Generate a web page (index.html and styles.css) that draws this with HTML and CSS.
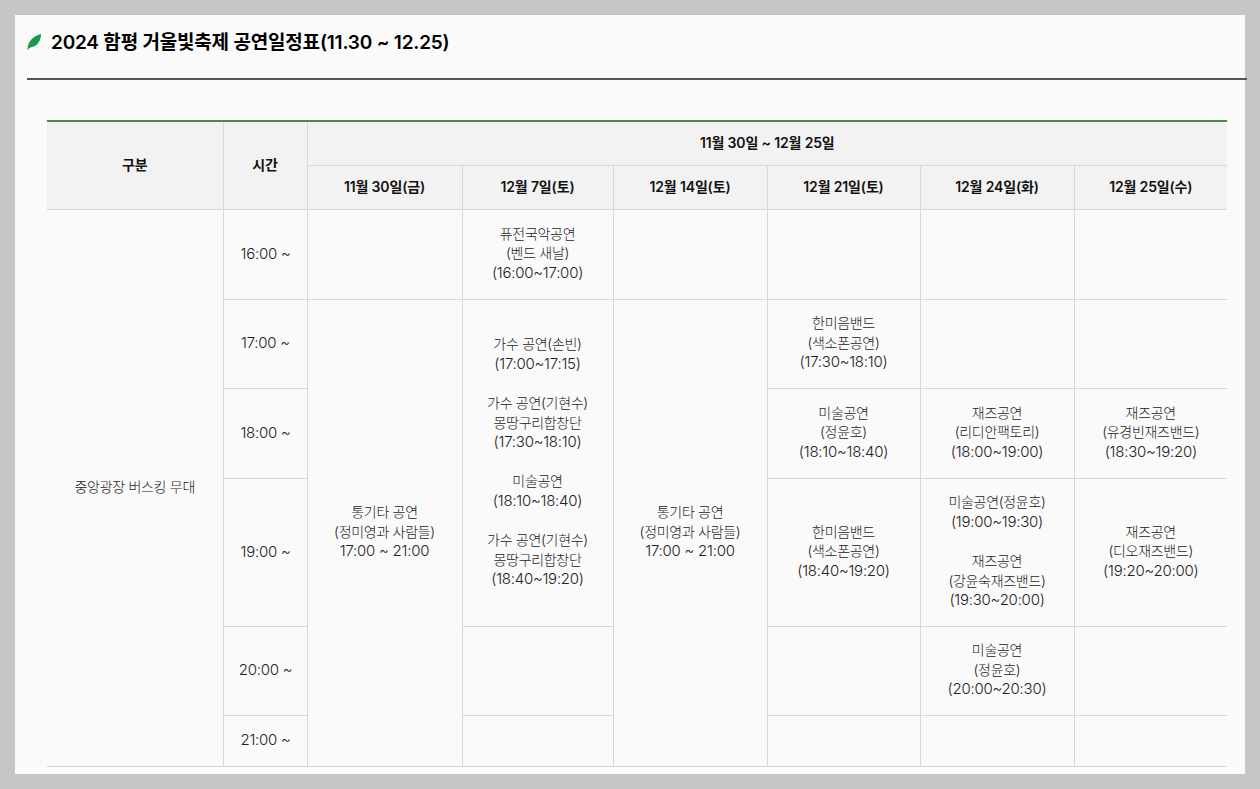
FILE: index.html
```html
<!DOCTYPE html>
<html lang="ko">
<head>
<meta charset="utf-8">
<title>2024 함평 거울빛축제 공연일정표</title>
<link rel="stylesheet" href="styles.css">
</head>
<body>
<main class="panel">
  <h1 class="title">
    <svg class="leaf" width="14" height="16" viewBox="0 0 14 16" aria-hidden="true"><path d="M0.6 16C0 9.5 5 2 14 0C14.2 7.5 9 13.5 3.2 13.4C2.2 14.2 1.4 15 0.6 16Z" fill="#1a9850"/></svg>
    <span>2024 함평 거울빛축제 공연일정표(11.30 ~ 12.25)</span>
  </h1>
  <table class="schedule">
    <colgroup>
      <col class="c-venue"><col class="c-time"><col class="c-d1"><col class="c-d2"><col class="c-d3"><col class="c-d4"><col class="c-d5"><col class="c-d6">
    </colgroup>
    <thead>
      <tr class="r-h1"><th rowspan="2">구분</th><th rowspan="2">시간</th><th colspan="6">11월 30일 ~ 12월 25일</th></tr>
      <tr class="r-h2"><th>11월 30일(금)</th><th>12월 7일(토)</th><th>12월 14일(토)</th><th>12월 21일(토)</th><th>12월 24일(화)</th><th>12월 25일(수)</th></tr>
    </thead>
    <tbody>
      <tr class="r-16">
        <td rowspan="6">중앙광장 버스킹 무대</td>
        <td class="slot"><span class="tm">16:00 ~</span></td>
        <td></td>
        <td>퓨전국악공연<br>(벤드 새날)<br><span class="tm">(16:00~17:00)</span></td>
        <td></td><td></td><td></td><td></td>
      </tr>
      <tr class="r-17">
        <td class="slot"><span class="tm">17:00 ~</span></td>
        <td rowspan="5">통기타 공연<br>(정미영과 사람들)<br><span class="tm">17:00 ~ 21:00</span></td>
        <td rowspan="3">가수 공연(손빈)<br><span class="tm">(17:00~17:15)</span><br><br>가수 공연(기현수)<br>몽땅구리합창단<br><span class="tm">(17:30~18:10)</span><br><br>미술공연<br><span class="tm">(18:10~18:40)</span><br><br>가수 공연(기현수)<br>몽땅구리합창단<br><span class="tm">(18:40~19:20)</span></td>
        <td rowspan="5">통기타 공연<br>(정미영과 사람들)<br><span class="tm">17:00 ~ 21:00</span></td>
        <td>한미음밴드<br>(색소폰공연)<br><span class="tm">(17:30~18:10)</span></td>
        <td></td><td></td>
      </tr>
      <tr class="r-18">
        <td class="slot"><span class="tm">18:00 ~</span></td>
        <td>미술공연<br>(정윤호)<br><span class="tm">(18:10~18:40)</span></td>
        <td>재즈공연<br>(리디안팩토리)<br><span class="tm">(18:00~19:00)</span></td>
        <td>재즈공연<br>(유경빈재즈밴드)<br><span class="tm">(18:30~19:20)</span></td>
      </tr>
      <tr class="r-19">
        <td class="slot"><span class="tm">19:00 ~</span></td>
        <td>한미음밴드<br>(색소폰공연)<br><span class="tm">(18:40~19:20)</span></td>
        <td>미술공연(정윤호)<br><span class="tm">(19:00~19:30)</span><br><br>재즈공연<br>(강윤숙재즈밴드)<br><span class="tm">(19:30~20:00)</span></td>
        <td>재즈공연<br>(디오재즈밴드)<br><span class="tm">(19:20~20:00)</span></td>
      </tr>
      <tr class="r-20">
        <td class="slot"><span class="tm">20:00 ~</span></td>
        <td></td><td></td>
        <td>미술공연<br>(정윤호)<br><span class="tm">(20:00~20:30)</span></td>
        <td></td>
      </tr>
      <tr class="r-21">
        <td class="slot"><span class="tm">21:00 ~</span></td>
        <td></td><td></td><td></td><td></td>
      </tr>
    </tbody>
  </table>
</main>
</body>
</html>
```

FILE: styles.css
```css
* { box-sizing: border-box; }
html, body { margin: 0; height: 100%; overflow: hidden; }
body {
  background: #c6c6c6;
  padding: 15px;
  font-family: Inter, "Noto Sans CJK KR", sans-serif;
  color: #222;
}
.panel {
  height: 759px;
  background: #fafafa;
  padding-left: 12px;
}
.title {
  display: flex;
  align-items: center;
  gap: 10px;
  height: 65px;
  width: 1220px;
  margin: 0;
  padding-bottom: 13px;
  border-bottom: 2px solid #555;
  font-size: 19px;
  font-weight: 600;
  color: #000;
  letter-spacing: -0.2px;
}
.leaf { flex: none; margin-top: 3px; }
.schedule {
  table-layout: fixed;
  border-collapse: collapse;
  width: 1180px;
  margin: 40px 0 0 20px;
  border-top: 2px solid #4a8a55;
  font-size: 14px;
  line-height: 19.6px;
  font-weight: 300;
  letter-spacing: -0.3px;
  text-align: center;
}
.schedule th, .schedule td {
  border: 1px solid #d8d8d8;
  vertical-align: middle;
}
.schedule td { padding: 0 0 2px; }
.schedule td.slot { padding: 1px 0 2px 1px; }
.schedule th { padding: 0; }
.schedule tr > :first-child { border-left: 0; }
.schedule tr > :last-child { border-right: 0; }
.schedule th {
  background: #f2f2f2;
  font-weight: 600;
  font-size: 14px;
  letter-spacing: -0.15px;
  color: #111;
}
.tm {
  font-size: 15px;
  line-height: 1;
  letter-spacing: -0.25px;
}
.schedule thead tr:first-child th { border-top: 0; }
.c-venue { width: 176px; }
.c-time { width: 84px; }
.c-d1 { width: 155px; }
.c-d2 { width: 151px; }
.c-d3 { width: 154px; }
.c-d4 { width: 153px; }
.c-d5 { width: 154px; }
.c-d6 { width: 153px; }
.r-h1 { height: 44px; }
.r-h2 { height: 44px; }
.r-16 { height: 90px; }
.r-17 { height: 89px; }
.r-18 { height: 90px; }
.r-19 { height: 148px; }
.r-20 { height: 89px; }
.r-21 { height: 51px; }
```
